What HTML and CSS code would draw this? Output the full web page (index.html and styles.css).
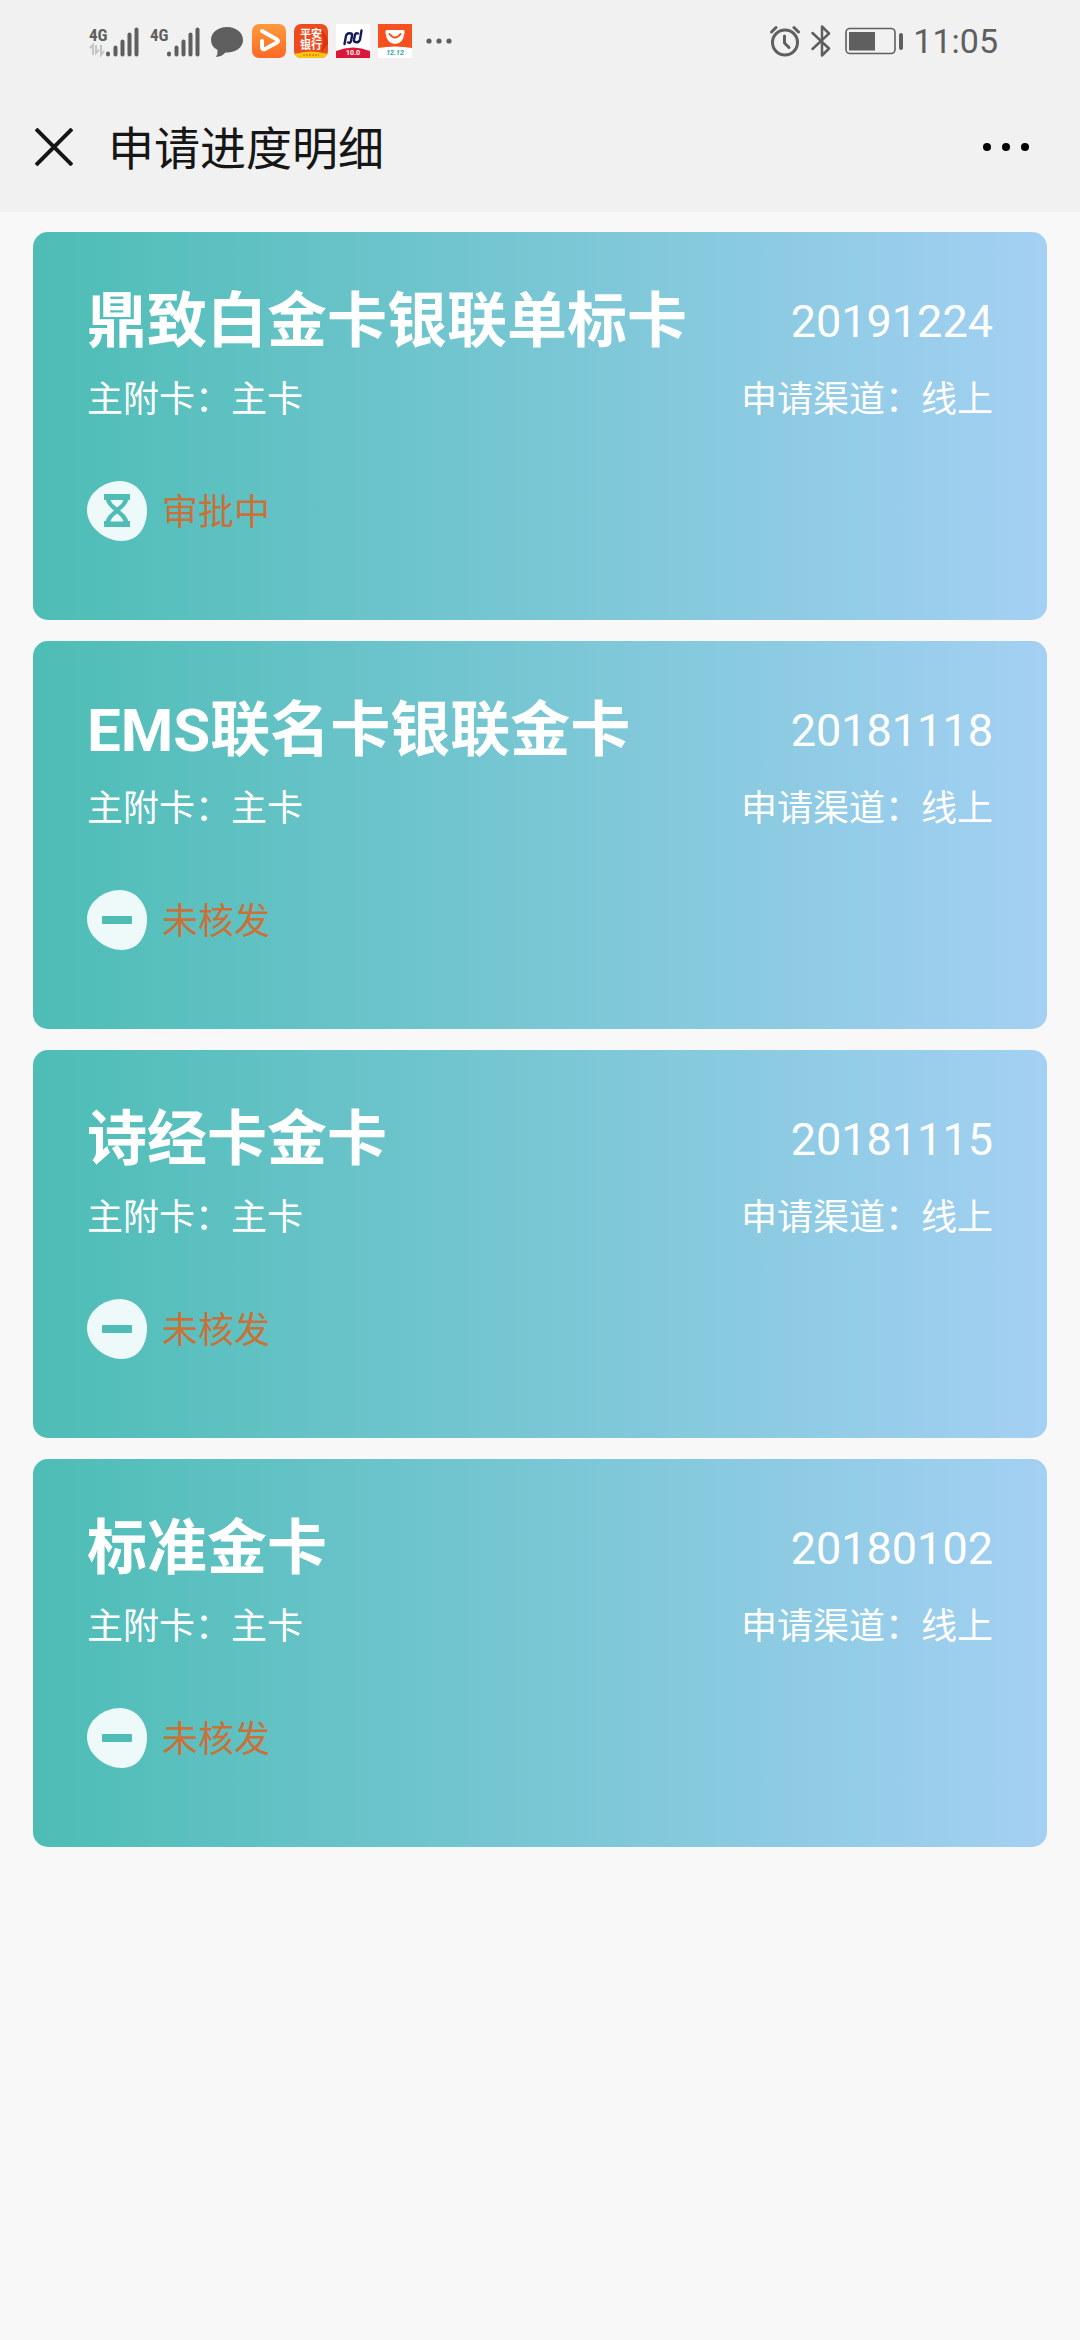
FILE: index.html
```html
<!DOCTYPE html>
<html lang="zh-CN">
<head>
<meta charset="utf-8">
<meta name="viewport" content="width=device-width, initial-scale=1">
<title>申请进度明细</title>
<link rel="stylesheet" href="styles.css">
</head>
<body>
<svg class="defs" aria-hidden="true">
  <symbol id="bars" viewBox="0 0 52 34">
    <path d="M20 29.500v1M27.500 23.500v7M34.500 17.500v13M41.500 10.500v20M48.500 5.500v25" fill="none" stroke="#5f5f5f" stroke-width="4" stroke-linecap="round"/>
  </symbol>
  <symbol id="blob" viewBox="0 0 60 60">
    <path d="M33 0C49 0 60 14 60 29C60 46 51 60 35 60C19 60 0 47 0 29C0 12 17 0 33 0Z" fill="#eef9fa"/>
  </symbol>
  <symbol id="pending" viewBox="0 0 60 60">
    <use href="#blob"/>
    <path d="M17 13H43V19H41Q41 23 33 29.500Q41 36 41 40H43V46H17V40H19Q19 36 27 29.500Q19 23 19 19H17Z" fill="#4fbcb6"/>
    <path d="M23.500 19H36.500Q35.500 22.500 30 26.500Q24.500 22.500 23.500 19ZM23.500 40.500Q24.500 36.500 30 32.500Q35.500 36.500 36.500 40.500Z" fill="#eef9fa"/>
  </symbol>
  <symbol id="declined" viewBox="0 0 60 60">
    <use href="#blob"/>
    <rect x="15" y="26" width="30" height="8" rx="1" fill="#4fbcb6"/>
  </symbol>
</svg>

<header class="top">
  <div class="statusbar">
    <div class="side">
      <svg class="signal" viewBox="0 0 52 34"><text class="net" x="1" y="17">4G</text><use href="#bars"/><path d="M2 24l3-3v10M8 21v8l3-3M13 21v10l3-4" fill="none" stroke="#c4c4c4" stroke-width="2"/></svg>
      <svg class="signal" viewBox="0 0 52 34"><text class="net" x="1" y="17">4G</text><use href="#bars"/></svg>
      <svg class="chat" viewBox="0 0 32 34"><path d="M16 3C25 3 32 8.500 32 16S25 28.500 16 28.500L14.500 28.500Q11 32.500 5 33Q7 30 6.500 26Q0 22.500 0 16C0 8.500 7 3 16 3Z" fill="#5f5f5f"/></svg>
      <svg class="app" viewBox="0 0 34 34">
        <defs><linearGradient id="orange" x2="0" y2="1"><stop stop-color="#ff9a3c"/><stop offset="1" stop-color="#fb6a25"/></linearGradient></defs>
        <rect width="34" height="34" rx="7" fill="url(#orange)"/>
        <path d="M10 7L25 15.500Q27 17 25 18.500L13 25Q10 26 10 23V17" fill="none" stroke="#fff" stroke-width="4" stroke-linecap="round" stroke-linejoin="round"/>
      </svg>
      <svg class="app" viewBox="0 0 34 34">
        <clipPath id="round"><rect width="34" height="34" rx="7"/></clipPath>
        <g clip-path="url(#round)">
          <rect width="34" height="34" fill="#ee4b1f"/>
          <path d="M21 2Q34 8 34 20L26 30Q34 10 21 2Z" fill="#d9340f"/>
          <path d="M0 34V30Q17 25 34 30V34Z" fill="#fbc50c"/>
          <text class="bank" x="17" y="14">平安</text>
          <text class="bank" x="17" y="25">银行</text>
          <path d="M9 31H25" stroke="#b5651d" stroke-width="1" stroke-dasharray="2 1"/>
        </g>
      </svg>
      <svg class="app" viewBox="0 0 34 34">
        <rect width="34" height="34" fill="#fff"/>
        <g fill="none" stroke="#171a5c" stroke-width="2.400" stroke-linecap="round">
          <path d="M8.500 20L10 12Q11 8.500 15 9.500Q16.500 10 16 12L15 17Q14.500 19.500 12 18.500"/>
          <path d="M25.500 6.500L24 15.500Q23 19 19.500 18Q17.500 17.500 18 15.500L19 11Q19.500 8.500 22 9.500"/>
        </g>
        <path d="M0 34V27Q17 20 34 27V34Z" fill="#dc1638"/>
        <text class="tag" x="17" y="31" fill="#fff">10.0</text>
      </svg>
      <svg class="app" viewBox="0 0 34 34">
        <rect width="34" height="34" fill="#fff"/>
        <path d="M0 0H34V24Q17 21 0 24Z" fill="#f4511e"/>
        <path d="M9 6H25Q27 6 26.500 9Q25 20 17 20T7.500 9Q7 6 9 6Z" fill="#fff"/>
        <path d="M11.500 10Q17 17 22.500 10" fill="none" stroke="#f4511e" stroke-width="2" stroke-linecap="round"/>
        <text class="tag" x="17" y="31" fill="#2aa4ab" font-style="italic">12.12</text>
      </svg>
      <svg class="dots" viewBox="0 0 26 34" fill="#5f5f5f"><circle cx="3" cy="17" r="2.600"/><circle cx="13" cy="17" r="2.600"/><circle cx="23" cy="17" r="2.600"/></svg>
    </div>
    <div class="side">
      <svg class="alarm" viewBox="0 0 30 34" fill="none" stroke="#5f5f5f"><circle cx="15" cy="18.500" r="12.500" stroke-width="3"/><path d="M14.500 12V19L19 23.500" stroke-width="3" stroke-linecap="round" stroke-linejoin="round"/><path d="M1.500 8L6 3.500M28.500 8L24 3.500" stroke-width="3" stroke-linecap="round"/></svg>
      <svg class="bt" viewBox="0 0 20 34" fill="none" stroke="#5f5f5f" stroke-width="2.500" stroke-linejoin="round" stroke-linecap="round"><path d="M1.500 9L18 24.500L11 31.500V2.500L18 9.500L1.500 25"/></svg>
      <svg class="battery" viewBox="0 0 58 34"><rect x="1" y="4.500" width="49" height="25" rx="4" fill="none" stroke="#5f5f5f" stroke-width="1.600"/><rect x="4" y="8" width="26" height="18.500" fill="#5f5f5f"/><rect x="54" y="9" width="4" height="17" rx="2" fill="#5f5f5f"/></svg>
      <time class="clock">11:05</time>
    </div>
  </div>
  <div class="navbar">
    <button class="icon-button" type="button" aria-label="关闭"><svg class="close" viewBox="0 0 38 38"><path d="M1 1L37 37M37 1L1 37" stroke="#161616" stroke-width="4"/></svg></button>
    <h1 class="page-title">申请进度明细</h1>
    <button class="icon-button" type="button" aria-label="更多"><svg class="more" viewBox="0 0 46 8"><circle cx="4" cy="4" r="4"/><circle cx="23" cy="4" r="4"/><circle cx="42" cy="4" r="4"/></svg></button>
  </div>
</header>

<main class="list">
  <article class="card">
    <div class="row head"><h2 class="name">鼎致白金卡银联单标卡</h2><time class="date">20191224</time></div>
    <div class="row meta"><span>主附卡：主卡</span><span>申请渠道：线上</span></div>
    <div class="state"><svg class="badge" viewBox="0 0 60 60"><use href="#pending"/></svg><span class="label">审批中</span></div>
  </article>
  <article class="card">
    <div class="row head"><h2 class="name">EMS联名卡银联金卡</h2><time class="date">20181118</time></div>
    <div class="row meta"><span>主附卡：主卡</span><span>申请渠道：线上</span></div>
    <div class="state"><svg class="badge" viewBox="0 0 60 60"><use href="#declined"/></svg><span class="label">未核发</span></div>
  </article>
  <article class="card">
    <div class="row head"><h2 class="name">诗经卡金卡</h2><time class="date">20181115</time></div>
    <div class="row meta"><span>主附卡：主卡</span><span>申请渠道：线上</span></div>
    <div class="state"><svg class="badge" viewBox="0 0 60 60"><use href="#declined"/></svg><span class="label">未核发</span></div>
  </article>
  <article class="card">
    <div class="row head"><h2 class="name">标准金卡</h2><time class="date">20180102</time></div>
    <div class="row meta"><span>主附卡：主卡</span><span>申请渠道：线上</span></div>
    <div class="state"><svg class="badge" viewBox="0 0 60 60"><use href="#declined"/></svg><span class="label">未核发</span></div>
  </article>
</main>
</body>
</html>
```
FILE: styles.css
```css
* { box-sizing: border-box; }

body {
  margin: 0;
  min-height: 100vh;
  background: #f8f8f8;
  color: #fff;
  font-family: Roboto, "Noto Sans CJK SC", sans-serif;
}

svg { display: block; flex: none; }
.defs { position: absolute; width: 0; height: 0; }

.top { background: #f1f1f1; color: #161616; }

.statusbar {
  display: flex;
  justify-content: space-between;
  align-items: center;
  height: 80px;
  padding: 2px 82px 0 88px;
}
.side { display: flex; align-items: center; gap: 9px; }
.signal { width: 52px; height: 34px; }
.chat { width: 32px; height: 34px; margin-left: 1px; }
.app { width: 34px; height: 34px; }
.app + .app { margin-left: -1px; }
.dots { width: 26px; height: 34px; margin-left: 5px; }
.alarm { width: 30px; height: 34px; }
.bt { width: 20px; height: 34px; margin-left: 2px; }
.battery { width: 58px; height: 34px; margin-left: 5px; }
.clock { color: #5f5f5f; font-size: 34px; line-height: 40px; margin-left: 1px; }

.net { font: bold 17px "Roboto Condensed", "Liberation Sans Narrow", Roboto, sans-serif; fill: #5f5f5f; }
.bank { font: bold 11px "Noto Sans CJK SC", sans-serif; fill: #fff; text-anchor: middle; }
.tag { font-family: Roboto, sans-serif; font-weight: bold; font-size: 7px; text-anchor: middle; }

.navbar {
  display: flex;
  align-items: center;
  height: 132px;
  padding: 2px 51px 0 35px;
}
.icon-button { padding: 0; border: 0; background: none; }
.close { width: 38px; height: 38px; }
.more { width: 46px; height: 8px; }
.page-title {
  flex: 1;
  margin: 0 0 0 35px;
  padding-top: 4px;
  font-size: 46px;
  line-height: 64px;
  font-weight: 400;
}

.list {
  display: flex;
  flex-direction: column;
  gap: 21px;
  padding: 20px 33px;
}
.card {
  padding: 50px 54px 79px;
  border-radius: 15px;
  background: linear-gradient(90deg, #4dbdb5, #a4d0f3);
}
.row { display: flex; justify-content: space-between; align-items: center; }
.name { margin: 0; font-size: 60px; line-height: 80px; font-weight: 700; }
.date { font-size: 45px; line-height: 80px; }
.meta { margin-top: 11px; font-size: 36px; line-height: 54px; }
.state {
  display: flex;
  align-items: center;
  gap: 15px;
  margin-top: 54px;
  color: #c9713a;
  font-size: 36px;
}
.badge { width: 60px; height: 60px; }
.label { padding-top: 4px; line-height: 56px; }
```
